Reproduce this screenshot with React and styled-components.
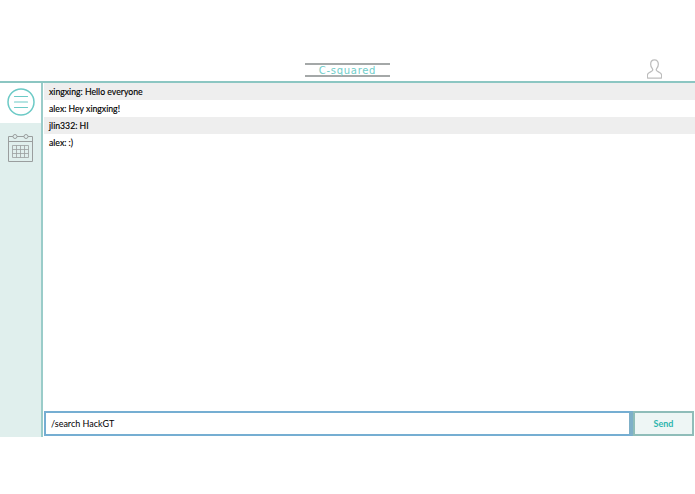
import React from 'react';
import styled, { createGlobalStyle } from 'styled-components';

const GlobalStyle = createGlobalStyle`
body {
  margin: 0;
  background: #fff;
  font-family: "Lato", "Open Sans", sans-serif;
}
`

const messages = [
  'xingxing: Hello everyone',
  'alex: Hey xingxing!',
  'jlin332: HI',
  'alex: :)',
];

const App = () => {
  return (
    <Page>
      <GlobalStyle />
      <Header>
        <Spacer />
        <Logo>C-squared</Logo>
        <UserSlot>
          <svg width="15" height="20" viewBox="0 0 18 24" fill="none" stroke="#bdbdbd" strokeWidth="1.500" strokeLinejoin="round">
            <path d="M9 1c-3 0-4.600 2.200-4.600 5.200 0 2.400.9 4.200 2 5.400.4.5.4 2-.3 2.700-1 1-4.800 2-5.400 4-.3 1-.3 2.600-.1 3.900 0 .4.3.8.8.8h15.200c.5 0 .8-.4.8-.8.2-1.300.2-2.900-.1-3.900-.6-2-4.400-3-5.400-4-.7-.7-.7-2.200-.3-2.700 1.100-1.200 2-3 2-5.400C13.600 3.200 12 1 9 1z" />
          </svg>
        </UserSlot>
      </Header>
      <Main>
        <Sidebar>
          <MenuSlot>
            <svg width="28" height="28" viewBox="0 0 28 28" fill="none" stroke="#6ccac6" strokeLinecap="round">
              <circle cx="14" cy="14" r="13" strokeWidth="1.500" />
              <path d="M7.500 8.500h13M7.500 14h13M7.500 19.500h13" strokeWidth="1.200" />
            </svg>
          </MenuSlot>
          <CalendarSlot>
            <svg width="27" height="30" viewBox="0 0 27 30" fill="none" stroke="#9a9e9e" strokeWidth="1">
              <path d="M6 3.500H1.500v25h24v-25H21M10 3.500h7" />
              <rect x="6" y="1.500" width="4" height="4" rx="2" />
              <rect x="17" y="1.500" width="4" height="4" rx="2" />
              <path d="M1.500 8.500h24" />
              <path d="M5.500 12.500h16v12h-16zM5.500 16.500h16M5.500 20.500h16M9.500 12.500v12M13.500 12.500v12M17.500 12.500v12" strokeWidth="0.800" />
            </svg>
          </CalendarSlot>
        </Sidebar>
        <ChatColumn>
          <MessageList>
            {messages.map((text, i) => (
              <Message key={i} $shaded={i % 2 === 0}>{text}</Message>
            ))}
          </MessageList>
          <InputBar>
            <ChatInput defaultValue="/search HackGT" />
            <SendButton>Send</SendButton>
          </InputBar>
        </ChatColumn>
      </Main>
    </Page>
  )
}

const Page = styled.div`
width: 695px;
height: 494px;
overflow: hidden;
`

const Header = styled.header`
display: flex;
align-items: flex-end;
justify-content: space-between;
height: 83px;
box-sizing: border-box;
padding-bottom: 2px;
border-bottom: 2px solid #8cc6c2;
`

const Spacer = styled.div`
width: 60px;
`

const Logo = styled.div`
box-sizing: border-box;
width: 85px;
height: 14px;
margin-bottom: 2px;
text-align: center;
font-family: "DejaVu Sans", sans-serif;
font-size: 10px;
line-height: 11px;
color: #6fcdc9;
border-top: 2px solid #a4a8a8;
border-bottom: 2px solid #a4a8a8;
letter-spacing: 0.7px;
`

const UserSlot = styled.div`
display: flex;
width: 60px;
padding-right: 21px;
box-sizing: border-box;
justify-content: center;
`

const Main = styled.div`
display: flex;
height: 354px;
`

const Sidebar = styled.aside`
display: flex;
flex-direction: column;
width: 43px;
box-sizing: border-box;
border-right: 2px solid #9accc9;
background: #e0efed;
`

const MenuSlot = styled.div`
display: flex;
justify-content: center;
height: 40px;
padding-top: 5px;
box-sizing: border-box;
background: #fff;
`

const CalendarSlot = styled.div`
display: flex;
justify-content: center;
padding-top: 10px;
`

const ChatColumn = styled.div`
display: flex;
flex: 1;
flex-direction: column;
min-width: 0;
padding-left: 1px;
`

const MessageList = styled.div`
flex: 1;
`

const Message = styled.div`
height: 17px;
padding-left: 5px;
font-size: 8.7px;
line-height: 17px;
color: #000;
-webkit-text-stroke: 0.15px #000;
background: ${props => (props.$shaded ? '#eeeeee' : '#fff')};
`

const InputBar = styled.div`
display: flex;
height: 26px;
box-sizing: border-box;
padding: 0 1px 1px 0;
`

const ChatInput = styled.input`
flex: 1;
min-width: 0;
box-sizing: border-box;
padding: 0 4px 0 5px;
border: 2px solid #75aed2;
border-right: 4px solid #7fb0c8;
outline: none;
font-family: inherit;
font-size: 9px;
color: #000;
`

const SendButton = styled.button`
width: 61px;
box-sizing: border-box;
border: 2px solid #8fbdb9;
background: #eef6f5;
font-family: inherit;
font-size: 9px;
font-weight: 700;
color: #2fb5ae;
`

export default App;
